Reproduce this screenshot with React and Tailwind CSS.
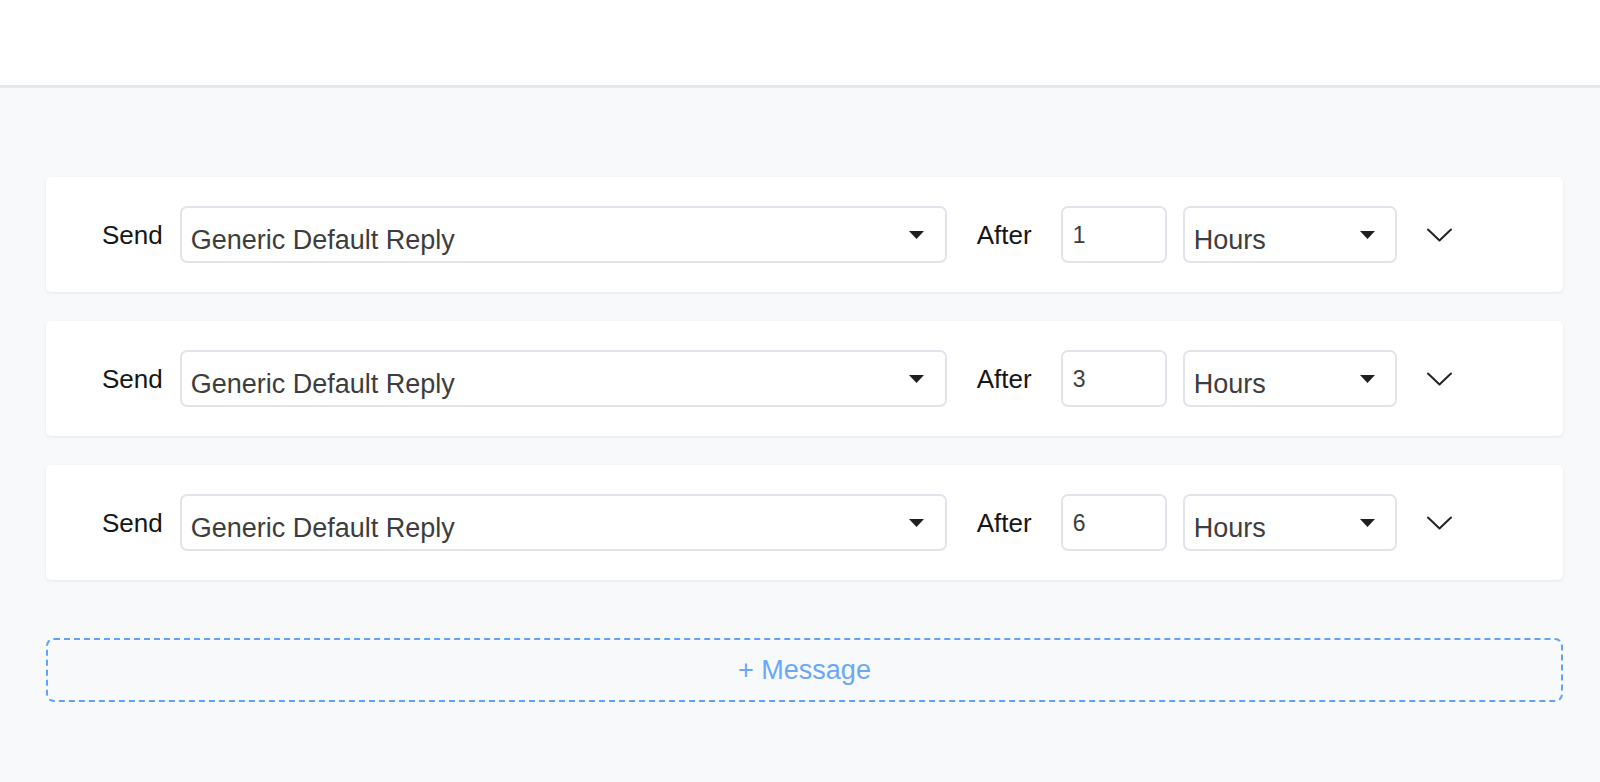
import React from "react";

function Triangle() {
  return (
    <svg width="15" height="8" viewBox="0 0 15 8" className="shrink-0">
      <path d="M0 0 L15 0 L7.5 8 Z" fill="#1f1f1f" />
    </svg>
  );
}

function Chevron() {
  return (
    <svg width="25" height="14" viewBox="0 0 25 14" className="shrink-0">
      <path d="M1 1.5 L12.5 12.5 L24 1.5" fill="none" stroke="#1f1f1f" strokeWidth="1.9" strokeLinecap="round" strokeLinejoin="round" />
    </svg>
  );
}

function Row({ value }) {
  return (
    <div className="h-[115px] bg-white rounded-[5px] shadow-[0_1px_3px_rgba(0,0,0,0.08)] flex items-center pl-[56px]">
      <span className="text-[26px] text-[#161616] leading-none">Send</span>
      <div className="ml-[17px] w-[767px] h-[57px] border-2 border-[#e1e4eb] rounded-[7px] flex items-center pl-[9px] pr-[21px]">
        <span className="flex-1 text-[27px] text-[#3d3d3d] leading-none pt-[12px]">Generic Default Reply</span>
        <Triangle />
      </div>
      <span className="ml-[30px] text-[26px] text-[#161616] leading-none">After</span>
      <div className="ml-[29px] w-[106px] h-[57px] border-2 border-[#e1e4eb] rounded-[7px] flex items-center pl-[10px]">
        <span className="text-[23px] text-[#3d3d3d] leading-none pt-[1px]">{value}</span>
      </div>
      <div className="ml-[16px] w-[214px] h-[57px] border-2 border-[#e1e4eb] rounded-[7px] flex items-center pl-[9px] pr-[20px]">
        <span className="flex-1 text-[27px] text-[#3d3d3d] leading-none pt-[12px]">Hours</span>
        <Triangle />
      </div>
      <div className="ml-[30px] pt-[1px]">
        <Chevron />
      </div>
    </div>
  );
}

export default function App() {
  return (
    <div className="min-h-[782px] bg-[#f8f9fb]" style={{ fontFamily: '"Liberation Sans", Arial, sans-serif' }}>
      <div className="h-[88px] bg-white border-b-[3px] border-[#e7e8eb]" />
      <div className="pl-[46px] pr-[37px] pt-[89px]">
        <div className="flex flex-col gap-[29px]">
          <Row value="1" />
          <Row value="3" />
          <Row value="6" />
        </div>
        <div className="mt-[58px] h-[64px] border-2 border-dashed border-[#62a2f6] rounded-[8px] flex items-center justify-center">
          <span className="text-[27px] text-[#6aa8f5] leading-none">+ Message</span>
        </div>
      </div>
    </div>
  );
}
